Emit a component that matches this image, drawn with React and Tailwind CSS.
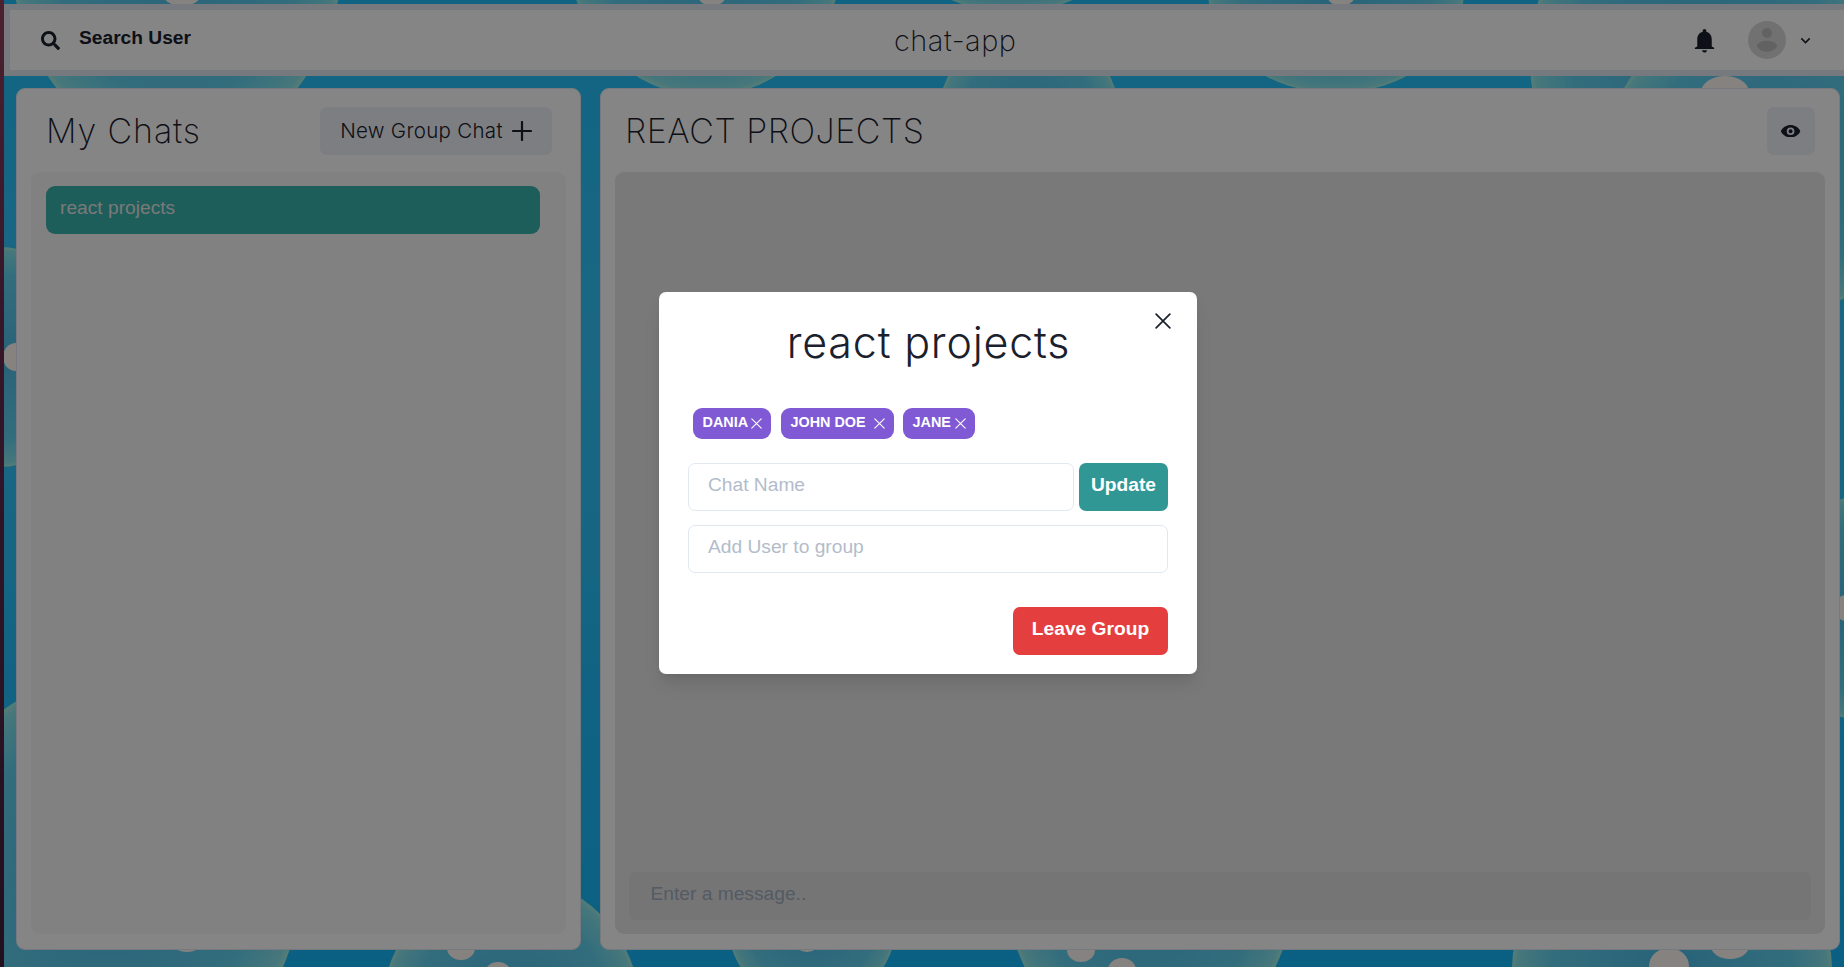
import React from "react";
import { FaSearch } from "react-icons/fa";

const bubbles = [
  [177, -60, 168, 213],
  [706, -50, 138, 146],
  [1012, -70, 116, 82],
  [1029, 130, 93, 110],
  [1336, -10, 128, 103],
  [1700, 60, 170, 190],
  [1770, 160, 165, 155],
  [0, 357, 90, 110],
  [110, 880, 191, 205],
  [511, 1010, 129, 133],
  [812, 925, 84, 80],
  [1150, 890, 143, 160],
  [1672, 970, 160, 150],
  [1850, 608, 60, 110],
];

const dots = [
  [182, -6, 19, 12], [712, -5, 14, 11], [1341, -5, 14, 11],
  [1725, 92, 24, 16], [16, 357, 13, 14], [187, 942, 15, 10],
  [461, 948, 14, 12], [498, 973, 13, 11], [807, 942, 13, 10],
  [1081, 950, 14, 12], [1122, 970, 14, 12], [1669, 966, 20, 18],
  [1730, 946, 19, 13], [1850, 608, 16, 14],
];

function Background() {
  return (
    <svg className="absolute inset-0 h-full w-full" viewBox="0 0 1844 967" preserveAspectRatio="none">
      <defs>
        <linearGradient id="sea" x1="0" y1="0" x2="0" y2="1">
          <stop offset="0" stopColor="#1fc0fb" />
          <stop offset="0.35" stopColor="#35c6fb" />
          <stop offset="1" stopColor="#15b9fb" />
        </linearGradient>
        <radialGradient id="bubble">
          <stop offset="0" stopColor="#4cbbe8" />
          <stop offset="0.75" stopColor="#62d2ef" />
          <stop offset="0.96" stopColor="#86e4ec" />
          <stop offset="1" stopColor="#a5efe4" />
        </radialGradient>
        <linearGradient id="edge" x1="0" y1="0" x2="0" y2="1">
          <stop offset="0" stopColor="#93405a" />
          <stop offset="0.3" stopColor="#6a2c52" />
          <stop offset="1" stopColor="#42203a" />
        </linearGradient>
      </defs>
      <rect width="1844" height="967" fill="url(#sea)" />
      {bubbles.map(([x, y, rx, ry]) => (
        <ellipse key={`${x}-${y}`} cx={x} cy={y} rx={rx} ry={ry} fill="url(#bubble)" />
      ))}
      {dots.map(([x, y, rx, ry]) => (
        <ellipse key={`${x}-${y}`} cx={x} cy={y} rx={rx} ry={ry} fill="#fffaf6" />
      ))}
      <rect width="4" height="967" fill="url(#edge)" />
    </svg>
  );
}

function BellIcon() {
  return (
    <svg viewBox="0 0 24 24" className="size-[29px]" fill="currentColor">
      <path d="M12 22c1.1 0 2-.9 2-2h-4a2 2 0 0 0 2 2zm6-5v-6c0-3.07-1.64-5.64-4.5-6.32V4c0-.83-.67-1.5-1.5-1.5s-1.5.67-1.5 1.5v.68C7.63 5.36 6 7.92 6 11v6l-2 1v1h16v-1z" />
    </svg>
  );
}

function CloseIcon({ className }) {
  return (
    <svg viewBox="0 0 14 14" className={className} fill="none" stroke="currentColor" strokeLinecap="round">
      <path d="M1 1l12 12M13 1L1 13" />
    </svg>
  );
}

function Header() {
  return (
    <header className="flex h-[72px] items-center border-y-[6px] border-l-[6px] border-[#e2e8f0] bg-white pr-[29px] pl-[31px]">
      <button className="flex w-[240px] items-center text-left font-bold">
        <FaSearch className="mt-[2px] mr-[19px] size-[19px]" />
        <span className="pb-[4px] text-[19.2px]">Search User</span>
      </button>
      <div className="flex-1 text-left pl-[613px] font-['Inter'] text-[29px] leading-none font-extralight tracking-[0.5px]">
        <span className="inline-block">chat-app</span>
      </div>
      <BellIcon />
      <div className="ml-[29px] flex size-[38px] items-center justify-center rounded-full bg-[#d9d9d9]">
        <svg viewBox="0 0 38 38" className="size-[38px]" fill="#bdbdbd">
          <ellipse cx="19" cy="12" rx="5" ry="5" />
          <path d="M8.7 24.5c1.5-3 5.5-4.8 10.3-4.8s8.800 1.800 10.300 4.800c-1.800 4-5.500 6.300-10.300 6.300s-8.500-2.300-10.300-6.300z" />
        </svg>
      </div>
      <svg viewBox="0 0 24 24" className="ml-[10px] size-[19px]" fill="currentColor">
        <path d="M16.590 8.590L12 13.170 7.410 8.590 6 10l6 6 6-6z" />
      </svg>
    </header>
  );
}

function ChatList() {
  return (
    <section className="flex w-[565px] flex-col rounded-[9px] border border-[#e2e8f0] bg-white px-[14px] pt-[18px] pb-[15px]">
      <div className="flex h-[48px] items-center justify-between pr-[14px] pl-[15px]">
        <h1 className="font-['Inter'] text-[34px] leading-none font-extralight tracking-[0.9px]">My Chats</h1>
        <button className="flex h-[48px] w-[232px] items-center justify-center gap-[9px] rounded-[7px] bg-[#edf2f7] font-['Inter'] text-[20.5px] font-light tracking-[0.3px]">
          <span>New Group Chat</span>
          <svg viewBox="0 0 20 20" className="size-[20px]" stroke="currentColor" strokeWidth="2.200" strokeLinecap="round">
            <path d="M10 1v18M1 10h18" />
          </svg>
        </button>
      </div>
      <div className="mt-[17px] flex-1 rounded-[9px] bg-[#f8f8f8] px-[15px] py-[14px]">
        <div className="h-[48px] w-[494px] rounded-[9px] bg-[#38b2ac] px-[14px] pt-[7px] text-[19.2px] leading-[29px] text-[#e8e8e8]">
          react projects
        </div>
      </div>
    </section>
  );
}

function ChatWindow() {
  return (
    <section className="flex w-[1240px] flex-col rounded-[9px] border border-[#e2e8f0] bg-white px-[14px] pt-[18px] pb-[15px]">
      <div className="flex h-[48px] items-center justify-between pr-[10px] pl-[10px]">
        <h2 className="font-['Inter'] text-[34px] leading-none font-extralight tracking-[0.5px]">REACT PROJECTS</h2>
        <button className="flex size-[48px] items-center justify-center rounded-[7px] bg-[#edf2f7]">
          <svg viewBox="0 0 20 13" className="h-[12.500px] w-[19.200px]">
            <path fill="currentColor" fillRule="evenodd" d="M10 0c4.200 0 7.900 2.400 9.800 5.700a1.600 1.600 0 0 1 0 1.600C17.900 10.600 14.200 13 10 13S2.100 10.600.2 7.300a1.600 1.600 0 0 1 0-1.600C2.100 2.400 5.800 0 10 0zm0 2.500a4 4 0 1 0 0 8 4 4 0 0 0 0-8z" />
            <circle cx="10" cy="6.500" r="2" fill="currentColor" />
          </svg>
        </button>
      </div>
      <div className="mt-[17px] flex flex-1 flex-col justify-end rounded-[9px] bg-[#e8e8e8] px-[14px] pb-[14px]">
        <div className="h-[48px] rounded-[7px] bg-[#e0e0e0] px-[21.5px] pt-[7px] text-[19.200px] leading-[29px] text-[#a0aec0]">
          Enter a message..
        </div>
      </div>
    </section>
  );
}

function Tag({ name, className }) {
  return (
    <span className={`flex h-[31px] items-center justify-between rounded-[9px] bg-[#805ad5] pr-[9px] pl-[9.5px] text-[14.400px] font-bold text-white ${className}`}>
      <span className="pb-[3px] leading-none">{name}</span>
      <CloseIcon className="size-[11px] [stroke-width:1.4]" />
    </span>
  );
}

function GroupModal() {
  return (
    <div className="relative flex h-[382px] w-[538px] flex-col rounded-[7px] bg-white px-[29px] shadow-[0_12px_18px_-3px_rgba(0,0,0,0.100),0_5px_7px_-2px_rgba(0,0,0,0.050)]">
      <button className="absolute top-[21px] right-[26px]">
        <CloseIcon className="size-[16px] [stroke-width:1.5]" />
      </button>
      <h2 className="mt-[27px] mb-[1px] pl-[1px] text-center font-['Inter'] text-[43px] leading-[46px] font-light tracking-[0.8px]">react projects</h2>
      <div className="mt-[42px] flex pl-[5px]">
        <Tag name="DANIA" className="w-[78px]" />
        <Tag name="JOHN DOE" className="ml-[10px] w-[113px]" />
        <Tag name="JANE" className="ml-[9px] w-[72px]" />
      </div>
      <div className="mt-[24px] flex gap-[5px] text-[19.200px] leading-[29px]">
        <div className="h-[48px] flex-1 rounded-[7px] border border-[#e2e8f0] px-[19px] pt-[6px] text-[#b3bccb]">Chat Name</div>
        <button className="flex h-[48px] w-[89px] justify-center rounded-[7px] bg-[#319795] pt-[7px] font-bold text-white">Update</button>
      </div>
      <div className="mt-[14px] h-[48px] rounded-[7px] border border-[#e2e8f0] px-[19px] pt-[6px] text-[19.200px] leading-[29px] text-[#b3bccb]">
        Add User to group
      </div>
      <button className="mt-[34px] flex h-[48px] w-[155px] justify-center self-end rounded-[7px] bg-[#e53e3e] pt-[7px] text-[19.200px] leading-[29px] font-bold text-white">
        Leave Group
      </button>
    </div>
  );
}

export default function App() {
  return (
    <div className="relative h-[967px] w-[1844px] overflow-hidden font-['Liberation_Sans',sans-serif] text-[#1a202c]">
      <Background />
      <div className="relative flex h-full flex-col pt-[4px] pl-[4px]">
        <Header />
        <main className="mt-[12px] ml-[12px] flex h-[862px] gap-[19px]">
          <ChatList />
          <ChatWindow />
        </main>
      </div>
      <div className="absolute inset-0 bg-black/48 pt-[292px] pl-[659px]">
        <GroupModal />
      </div>
    </div>
  );
}
